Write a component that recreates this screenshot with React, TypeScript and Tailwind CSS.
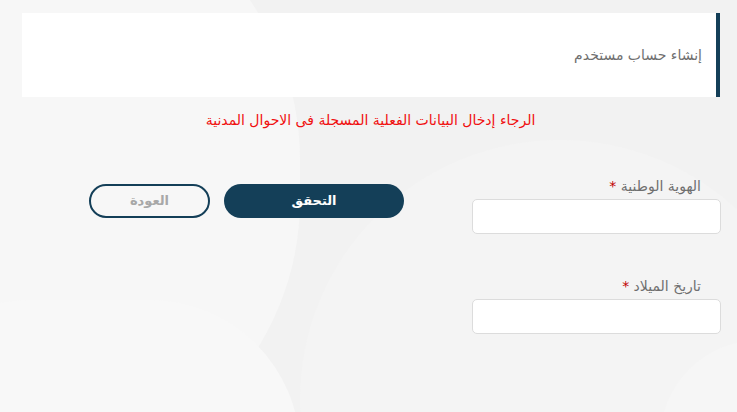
import React from "react";

export default function App() {
  const font = { fontFamily: '"DejaVu Sans", "Noto Sans", sans-serif' };
  return (
    <div dir="rtl" className="relative w-[737px] h-[412px] overflow-hidden bg-[#f2f2f2]" style={font}>
      {/* decorative background swirls */}
      <div className="absolute -left-[260px] -top-[120px] w-[560px] h-[600px] rounded-full bg-[#f7f7f7]" />
      <div className="absolute left-[300px] top-[140px] w-[520px] h-[520px] rounded-full bg-[#f4f4f4]" />
      <div className="absolute -left-[120px] top-[300px] w-[420px] h-[300px] rounded-full bg-[#f8f8f8]" />
      <div className="absolute left-[660px] top-[340px] w-[200px] h-[200px] rounded-full bg-[#f6f6f6]" />

      <div className="relative">
        <div className="mt-[13px] mr-[17px] ml-[22px] h-[84px] bg-white border-r-4 border-[#143f58] flex items-center pr-[14px]">
          <span className="text-[14px] text-[#6f6f6f]">إنشاء حساب مستخدم</span>
        </div>

        <div className="mt-[13px] text-center text-[14px] leading-[20px] text-[#f01010] pl-[4px]">
          الرجاء إدخال البيانات الفعلية المسجلة فى الاحوال المدنية
        </div>

        <div className="flex mt-[46px] mr-[16px]">
          <div className="w-[249px] flex flex-col">
            <label className="pr-[20px] text-[14px] leading-[20px] text-[#6f6f6f]">
              الهوية الوطنية <span className="text-[#c00000]">*</span>
            </label>
            <input className="mt-[3px] h-[35px] rounded-[5px] border border-[#dcdcdc] bg-white outline-none" />
            <label className="mt-[42px] pr-[20px] text-[14px] leading-[20px] text-[#6f6f6f]">
              تاريخ الميلاد <span className="text-[#c00000]">*</span>
            </label>
            <input className="mt-[3px] h-[35px] rounded-[5px] border border-[#dcdcdc] bg-white outline-none" />
          </div>

          <div className="flex mr-[68px] mt-[8px] gap-[14px] items-start">
            <button className="w-[180px] h-[34px] rounded-full bg-[#143f58] text-white text-[13px] font-bold">
              التحقق
            </button>
            <button className="w-[121px] h-[34px] rounded-full border-2 border-[#143f58] bg-transparent text-[#a8a8a8] text-[13px] font-bold">
              العودة
            </button>
          </div>
        </div>
      </div>
    </div>
  );
}
